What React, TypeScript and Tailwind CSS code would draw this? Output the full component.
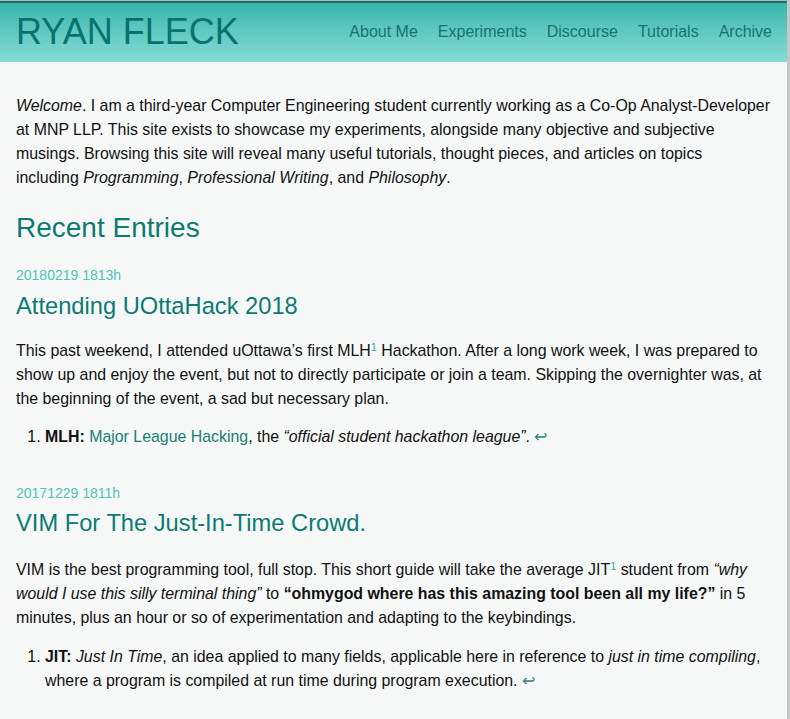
export default function App() {
  return (
    <div className="min-h-screen w-full border-r-[3px] border-[#c6c8c8] bg-[#f6f8f8] font-['Liberation_Sans',Arial,sans-serif] text-[#111]">
      <Header />
      <main className="pl-4 pr-3 pt-[32px] text-[15.9px] leading-[24px]">
        <p>
          <em>Welcome</em>. I am a third-year Computer Engineering student currently working as a Co-Op Analyst-Developer
          at MNP LLP. This site exists to showcase my experiments, alongside many objective and subjective musings.
          Browsing this site will reveal many useful tutorials, thought pieces, and articles on topics{" "}
          <span className="whitespace-nowrap">
            including <em>Programming</em>,
          </span>{" "}
          <em>Professional Writing</em>, and <em>Philosophy</em>.
        </p>

        <h1 className="mt-[21px] text-[28px] leading-[34px] text-[#0c7a73]">Recent Entries</h1>

        <article className="mt-[21px]">
          <div className="text-[14px] leading-[18px] text-[#4ec2ba]">20180219 1813h</div>
          <h2 className="mt-[7px] text-[23.7px] leading-[30px] text-[#0c7a73]">Attending UOttaHack 2018</h2>
          <p className="mt-[18px]">
            This past weekend, I attended uOttawa’s first MLH<Sup /> Hackathon. After a long work week, I was prepared to
            show up and enjoy the event, but not to directly participate or join a team. Skipping the overnighter was, at
            the beginning of the event, a sad but necessary plan.
          </p>
          <ol className="mt-[14px] list-decimal pl-[29px]">
            <li>
              <b>MLH:</b> <a className="text-[#1c7d76]">Major League Hacking</a>, the{" "}
              <em>“official student hackathon league”</em>. <Back />
            </li>
          </ol>
        </article>

        <article className="mt-[35px]">
          <div className="text-[14px] leading-[18px] text-[#4ec2ba]">20171229 1811h</div>
          <h2 className="mt-[6px] text-[23.7px] leading-[30px] text-[#0c7a73]">VIM For The Just-In-Time Crowd.</h2>
          <p className="mt-[20px]">
            VIM is the best programming tool, full stop. This short guide will take the average JIT<Sup /> student from{" "}
            <em>“why would I use this silly terminal thing”</em> to{" "}
            <b>“ohmygod where has this amazing tool been all my life?”</b> in 5 minutes, plus an hour or so of
            experimentation and adapting to the keybindings.
          </p>
          <ol className="mt-[15px] list-decimal pl-[29px]">
            <li>
              <b>JIT:</b> <em>Just In Time</em>, an idea applied to many fields, applicable here in reference to{" "}
              <em>just in time compiling</em>, where a program is compiled at run time during program execution. <Back />
            </li>
          </ol>
        </article>
      </main>
    </div>
  );
}

function Header() {
  return (
    <header className="border-t border-[#b4b8b8]">
      <div className="flex h-[61px] items-center justify-between border-t-2 border-[#1d6d67] bg-gradient-to-b from-[#36b6ac] to-[#84ddd6] pl-4 pr-[15px]">
        <span className="pb-[2px] text-[36px] leading-none text-[#08736d]">RYAN FLECK</span>
        <nav className="flex items-center gap-5 pb-[2px] text-[16px] text-[#17736c]">
          <a>About Me</a>
          <a>Experiments</a>
          <a>Discourse</a>
          <a>Tutorials</a>
          <a>Archive</a>
        </nav>
      </div>
    </header>
  );
}

function Sup() {
  return <sup className="text-[11px] text-[#36aaa2]">1</sup>;
}

function Back() {
  return <a className="text-[16px] text-[#2a8a82]">↩</a>;
}
